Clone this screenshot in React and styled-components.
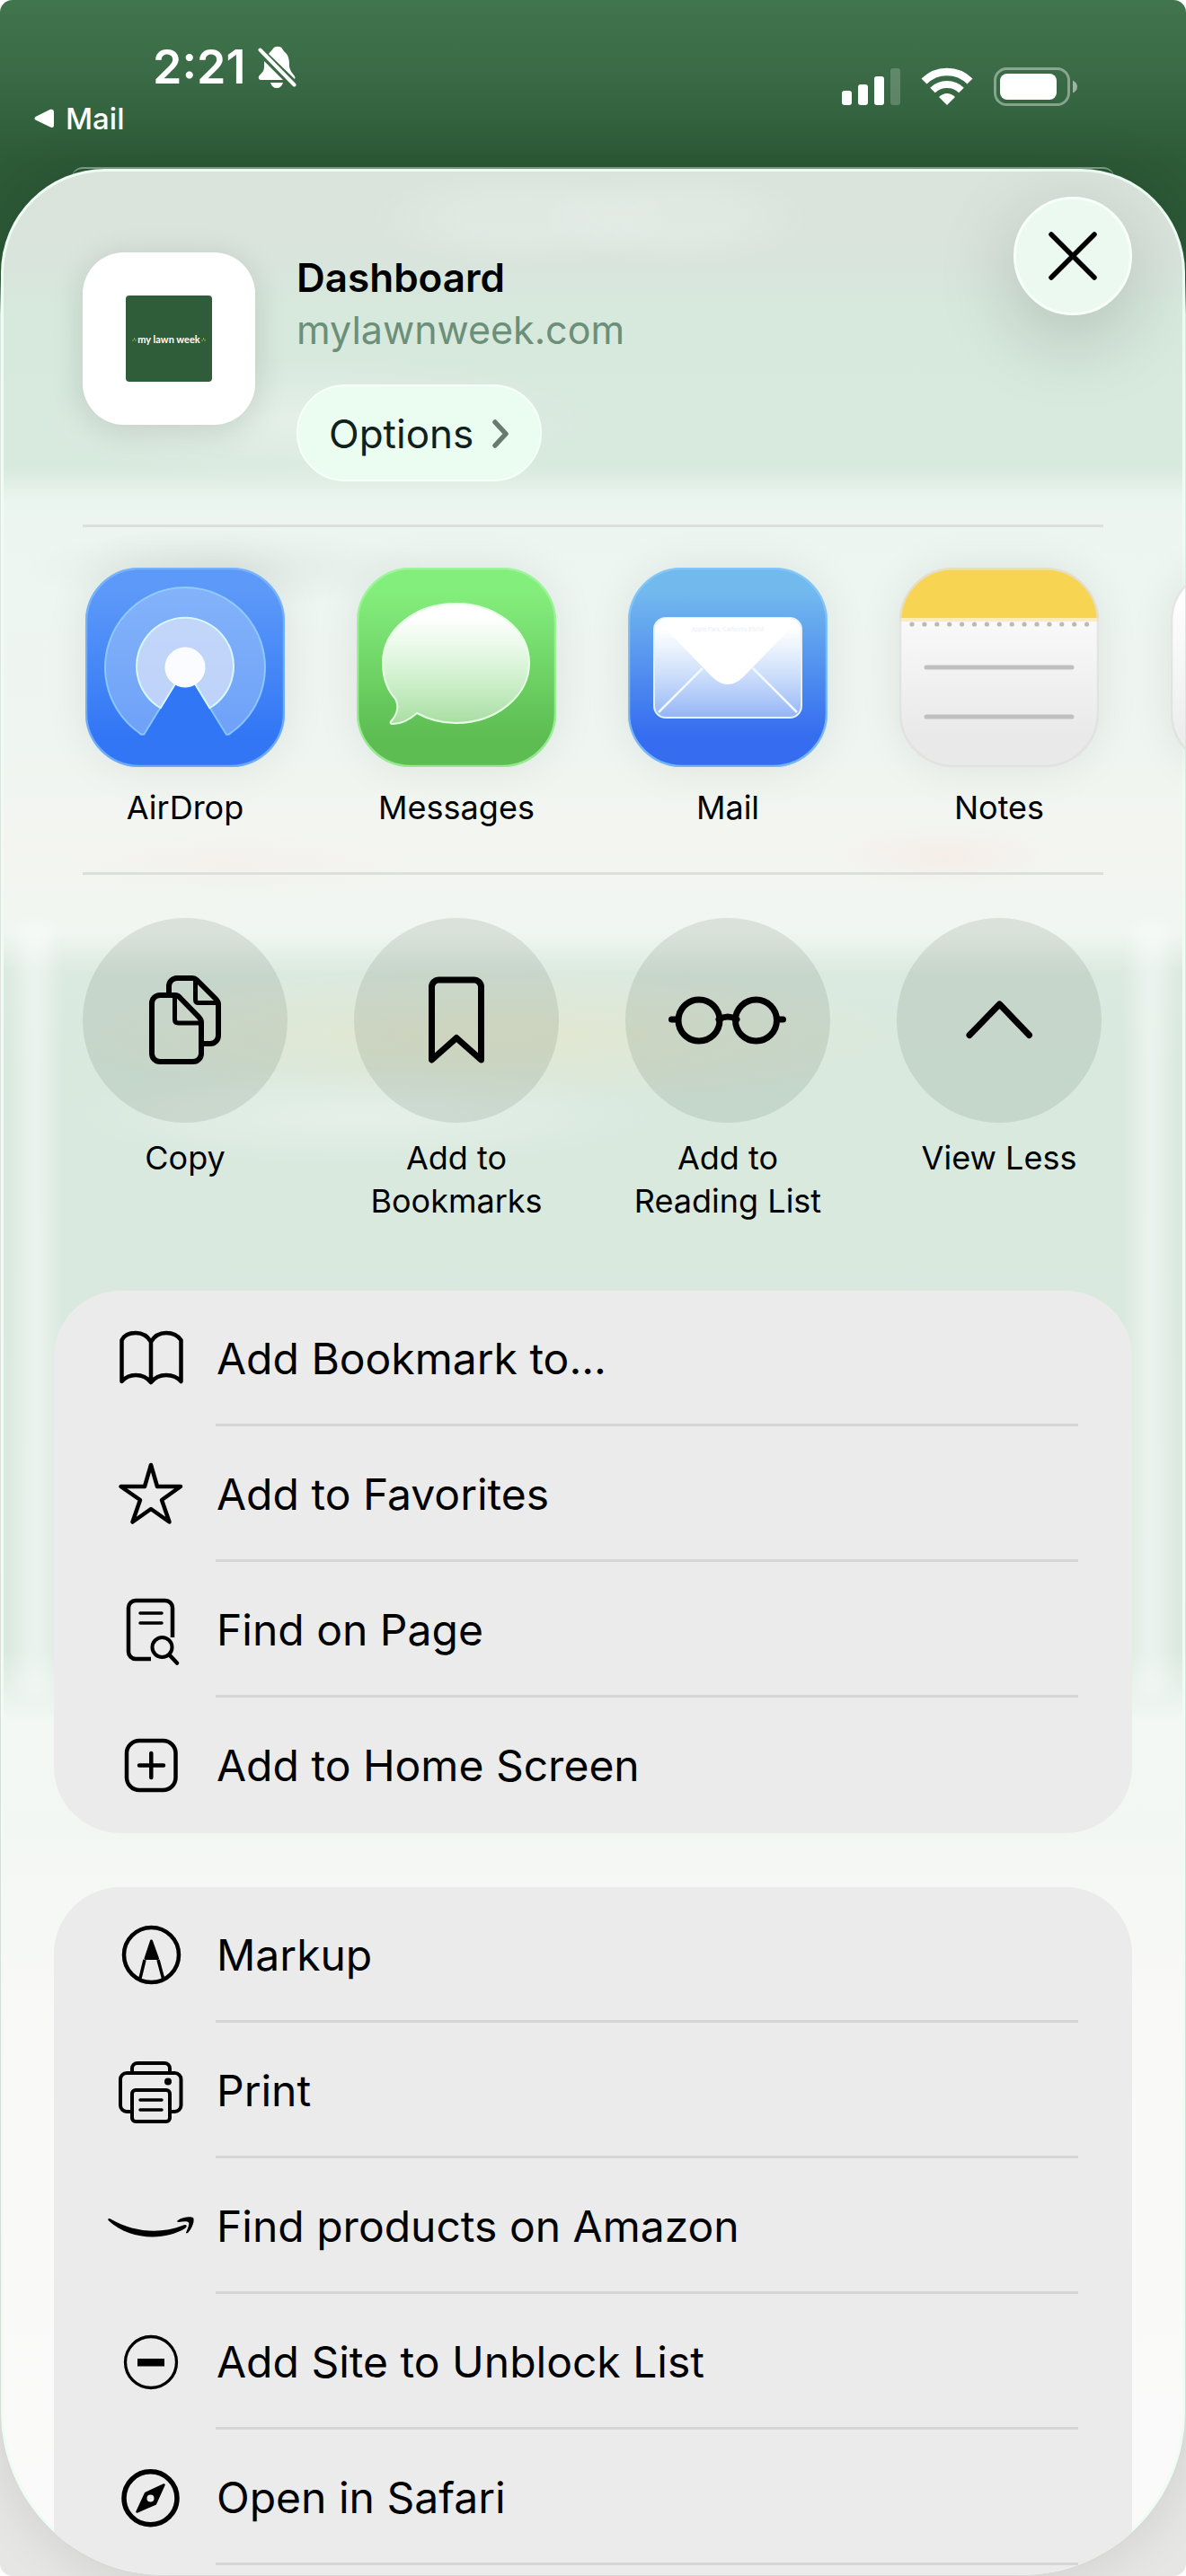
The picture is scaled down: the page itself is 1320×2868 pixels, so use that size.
// src/App.jsx
import React from 'react';
import styled, { createGlobalStyle } from 'styled-components';

const GlobalStyle = createGlobalStyle`
  * {
    box-sizing: border-box;
  }

  body {
    margin: 0;
    background: #ffffff;
    color: #000000;
    font-family: Inter, 'Liberation Sans', sans-serif;
  }

  button {
    border: 0;
    padding: 0;
    margin: 0;
    background: none;
    color: inherit;
    font: inherit;
    cursor: pointer;
  }

  svg {
    display: block;
    flex-shrink: 0;
  }
`;

const Screen = styled.div`
  display: flex;
  flex-direction: column;
  height: 100vh;
  overflow: hidden;
  border-radius: 14px;
  background: linear-gradient(
    #41754d 0,
    #3a6b46 80px,
    #2d5a37 180px,
    #2c5836 310px,
    #e4f5ea 350px,
    #eef3ef 600px,
    #e6e6e5 100%
  );
`;

const StatusBar = styled.header`
  display: flex;
  flex-direction: column;
  height: 188px;
  flex-shrink: 0;
  color: #ffffff;
`;

const StatusRow = styled.div`
  display: flex;
  align-items: flex-start;
  justify-content: space-between;
  height: 112px;
  padding: 44px 120px 0 170px;
`;

const Clock = styled.div`
  display: flex;
  align-items: center;
  gap: 14px;
  font-size: 52px;
  font-weight: 600;
  line-height: 62px;
`;

const Indicators = styled.div`
  display: flex;
  gap: 23px;
  padding-top: 31px;
`;

const BackLink = styled.a`
  display: flex;
  align-items: center;
  gap: 12px;
  height: 40px;
  padding-left: 38px;
  color: #ffffff;
  font-size: 33px;
  font-weight: 500;
  line-height: 40px;
  text-decoration: none;
`;

const SheetBehind = styled.div`
  height: 12px;
  margin: auto 80px -10px;
  border-top: 2px solid #7fa189;
  border-radius: 40px 40px 0 0;
`;

const Sheet = styled.main`
  position: relative;
  z-index: 0;
  display: flex;
  flex: 1;
  flex-direction: column;
  min-height: 0;
  margin: 0 1px 1px;
  overflow: hidden;
  border-radius: 116px 116px 182px 182px;
  box-shadow: inset 0 0 0 3px #eefdf4, 0 0 60px rgba(0, 0, 0, 0.12);
  background:
    radial-gradient(closest-side, rgba(255, 255, 255, 0.18) 40%, transparent) 410px 0 / 340px 110px no-repeat,
    radial-gradient(closest-side, rgba(255, 255, 255, 0.18) 40%, transparent) 600px 0 / 300px 110px no-repeat,
    radial-gradient(closest-side, rgba(255, 255, 255, 0.32), transparent) 40px 210px / 620px 140px no-repeat,
    radial-gradient(closest-side, rgba(0, 0, 0, 0.05), transparent) 20px 400px / 460px 90px no-repeat,
    radial-gradient(closest-side, rgba(255, 190, 180, 0.08), transparent) 60px 740px / 400px 70px no-repeat,
    radial-gradient(closest-side, rgba(255, 180, 170, 0.12), transparent) 920px 730px / 260px 70px no-repeat,
    radial-gradient(closest-side, rgba(255, 225, 170, 0.26), transparent) 60px 890px / 960px 150px no-repeat,
    radial-gradient(closest-side, rgba(255, 255, 255, 0.32), transparent) 60px 1000px / 680px 110px no-repeat,
    linear-gradient(
      #dae3dc 0,
      #d9e4dc 100px,
      #d7e8dc 150px,
      #d8e9de 330px,
      #ebf5ef 370px,
      #eef6f1 460px,
      #eff5f0 650px,
      #f4f5f1 760px,
      #f0f6f1 850px,
      #dbeae0 895px,
      #d9e9de 1000px,
      #dae9df 1650px,
      #f3f8f4 1730px,
      #f3f7f3 1850px,
      #f9f9f8 2060px,
      #fafafa 100%
    );

  &::before,
  &::after {
    content: '';
    position: absolute;
    z-index: -1;
    top: 840px;
    height: 860px;
    width: 36px;
    background: rgba(255, 255, 255, 0.45);
    filter: blur(10px);
  }

  &::before {
    left: 20px;
  }

  &::after {
    right: 20px;
  }
`;

const SheetHeader = styled.div`
  display: flex;
  align-items: flex-start;
  justify-content: space-between;
  padding: 31px 59px 48px 91px;
`;

const Preview = styled.div`
  display: flex;
  align-items: flex-start;
  gap: 46px;
  padding-top: 62px;
`;

const SiteIcon = styled.div`
  display: flex;
  align-items: center;
  justify-content: center;
  width: 192px;
  height: 192px;
  border-radius: 46px;
  background: #ffffff;
  box-shadow: 0 6px 36px rgba(0, 0, 0, 0.13);
`;

const SiteLogo = styled.div`
  display: flex;
  align-items: center;
  justify-content: center;
  gap: 1px;
  width: 96px;
  height: 96px;
  border-radius: 4px;
  background: #2f5c39;
  color: #ffffff;
  font-family: Lato, sans-serif;
  font-size: 11px;
  font-weight: 700;
  white-space: nowrap;
`;

const PageTitle = styled.h1`
  margin: 0;
  font-size: 44px;
  font-weight: 600;
  line-height: 56px;
`;

const PageUrl = styled.p`
  margin: 0 0 31px;
  color: #6b8f78;
  font-size: 43px;
  line-height: 60px;
`;

const OptionsButton = styled.button`
  display: flex;
  align-items: center;
  gap: 20px;
  height: 108px;
  padding: 2px 34px 0;
  border: 2px solid #f7fffa;
  border-radius: 54px;
  background: #ebfcf1;
  color: #10201a;
  font-size: 44px;
`;

const CloseButton = styled.button`
  display: flex;
  align-items: center;
  justify-content: center;
  width: 132px;
  height: 132px;
  border: 3px solid #f8fffb;
  border-radius: 50%;
  background: #ebf9f0;
  box-shadow: 0 24px 90px rgba(0, 0, 0, 0.18);
`;

const Divider = styled.hr`
  width: calc(100% - 182px);
  height: 3px;
  margin: 0 91px;
  flex-shrink: 0;
  border: 0;
  background: #dbe0dc;
`;

const Strip = styled.div`
  display: flex;
  gap: 74px;
  flex-shrink: 0;
  overflow: hidden;
  padding: ${({ $top }) => $top}px 0 ${({ $bottom }) => $bottom}px 91px;
`;

const StripItem = styled.button`
  display: flex;
  flex-direction: column;
  align-items: center;
  gap: ${({ $gap }) => $gap}px;
  width: 228px;
  flex-shrink: 0;
  font-size: 36px;
  line-height: 48px;
`;

const AppTile = styled.span`
  border-radius: 60px;
  box-shadow: 0 0 50px rgba(0, 0, 0, 0.08);
`;

const ActionCircle = styled.span`
  width: 228px;
  height: 228px;
  border-radius: 50%;
  background: rgba(0, 20, 0, 0.09);
`;

const List = styled.ul`
  display: flex;
  flex-direction: column;
  flex-shrink: 0;
  margin: 0 59px 60px;
  padding: 0;
  overflow: hidden;
  border-radius: 74px;
  background: #ebebeb;
  list-style: none;

  &:last-child {
    flex: 1 0 auto;
    margin-bottom: 0;
    border-radius: 74px 74px 0 0;
  }
`;

const ListButton = styled.button`
  display: flex;
  align-items: center;
  gap: 24px;
  width: 100%;
  padding: 0 60px;
  text-align: left;

  svg {
    margin-bottom: 4px;
  }
`;

const ListLabel = styled.span`
  flex: 1;
  height: 151px;
  padding: 2px 0 0 1px;
  border-bottom: 3px solid ${({ $line }) => ($line ? '#d5d5d5' : 'transparent')};
  font-size: 48px;
  line-height: 148px;
  white-space: nowrap;
`;

const LineIcon = ({ width = 4.5, children }) => (
  <svg
    width="96"
    height="96"
    viewBox="0 0 96 96"
    fill="none"
    stroke="#000"
    strokeWidth={width}
    strokeLinecap="round"
    strokeLinejoin="round"
    overflow="visible"
    aria-hidden="true"
  >
    {children}
  </svg>
);

const BookIcon = () => (
  <LineIcon>
    <path d="M48 31C44 24 38 21 31 21S18 24 15.5 29V75C19 71 24 68 31 68S44 71 48 76C52 71 58 68 65 68S78 71 81.5 75V29C78 24 72 21 65 21S52 24 48 31ZM48 31V75" />
  </LineIcon>
);

const StarIcon = () => (
  <LineIcon>
    <path d="M48 17L55 41H81L60 56L68.500 80.500L48 66L27.500 80.500L36 56L14.500 41H41Z" />
  </LineIcon>
);

const FindIcon = () => (
  <LineIcon>
    <path d="M48 82H31a8 8 0 0 1-8-8V25a8 8 0 0 1 8-8H64a8 8 0 0 1 8 8V58" strokeLinecap="butt" />
    <path d="M36 31H60M36 42H60" strokeWidth="3.5" />
    <circle cx="60.500" cy="69" r="11" strokeWidth="4" />
    <path d="M69 78L77 86.500" />
  </LineIcon>
);

const AddBoxIcon = () => (
  <LineIcon>
    <rect x="21" y="22" width="54.500" height="55" rx="14" />
    <path d="M35 49.500H62M48.300 36V63" />
  </LineIcon>
);

const MarkupIcon = () => (
  <LineIcon>
    <circle cx="48.500" cy="49.500" r="30.500" />
    <path d="M41 55L36 75.500M56 55L61.500 75.500" strokeWidth="3.5" strokeLinecap="butt" />
    <path d="M48.500 34L42 53.500H55.500Z" fill="#000" strokeWidth="3" />
  </LineIcon>
);

const PrinterIcon = () => (
  <LineIcon width={4}>
    <path d="M26 73H21a7 7 0 0 1-7-7V37a7 7 0 0 1 7-7H74.500a7 7 0 0 1 7 7V66a7 7 0 0 1-7 7H70" />
    <path d="M27 30V25a6 6 0 0 1 6-6H63a6 6 0 0 1 6 6V30" />
    <rect x="27" y="49" width="42" height="35" rx="4" />
    <path d="M36 60H60M36 71H60" strokeWidth="3.5" />
    <circle cx="67" cy="39.500" r="4" fill="#000" stroke="none" />
  </LineIcon>
);

const SmileIcon = () => (
  <LineIcon>
    <g fill="#000" stroke="none">
      <path d="M.5 43C0 41 1 40.500 3 41.500C28 56 58 59 84 48.500C88 47 89 50 86 52C62 66.500 24 65 .5 43Z" />
      <path d="M78 43C83 39 92 38.500 95 40C97 43 94 52 89 57C87.500 58 86.500 57.500 87.500 55.500C89 52 91 47 90 45.500C88.500 43.500 83 44.500 79 45C77 45 76.500 44 78 43Z" />
    </g>
  </LineIcon>
);

const MinusIcon = () => (
  <LineIcon width={3.3}>
    <circle cx="48" cy="50" r="28.500" />
    <rect x="33" y="46" width="30" height="8.500" fill="#000" stroke="none" />
  </LineIcon>
);

const CompassIcon = () => (
  <LineIcon width={5.5}>
    <circle cx="47.500" cy="50.300" r="29.500" />
    <path
      d="M62.500 35.500L53 56.500L32.500 65.500L42 45Z"
      fill="#000"
      strokeWidth="2.5"
    />
    <circle cx="47.500" cy="50.500" r="4" fill="#ebebeb" stroke="none" />
  </LineIcon>
);

const CircleIcon = ({ children }) => (
  <svg
    width="228"
    height="228"
    viewBox="0 0 228 228"
    fill="none"
    stroke="#000"
    strokeWidth="7"
    strokeLinecap="round"
    strokeLinejoin="round"
    aria-hidden="true"
  >
    {children}
  </svg>
);

const CopyIcon = () => (
  <CircleIcon>
    <g strokeWidth="6" strokeLinecap="butt">
      <path d="M96 84V76a9 9 0 0 1 9-9H122q3 0 5 2L148 90q3 3 3 6V131a9 9 0 0 1-9 9H134" />
      <path d="M125.500 68V91q0 3.500 3.500 3.500H151" strokeWidth="5" />
      <path d="M103 86H86a9 9 0 0 0-9 9V151a9 9 0 0 0 9 9H123a9 9 0 0 0 9-9V116q0-3-3-6L108 88.500q-2-2.500-5-2.500Z" />
      <path d="M102.500 87V113q0 4 4 4H132" strokeWidth="5" />
    </g>
  </CircleIcon>
);

const BookmarkIcon = () => (
  <CircleIcon>
    <path d="M86.500 158V77a8 8 0 0 1 8-8H133.500a8 8 0 0 1 8 8V158L114 133.500Z" />
  </CircleIcon>
);

const GlassesIcon = () => (
  <CircleIcon>
    <circle cx="82" cy="114" r="23" />
    <circle cx="145.500" cy="114" r="23" />
    <path d="M104 113Q114 107 124 113M51.500 113H58M169 113H175.500" />
  </CircleIcon>
);

const ChevronUpIcon = () => (
  <CircleIcon>
    <path d="M81 130.500L114.500 96L147.500 130.500" />
  </CircleIcon>
);

const Tile = ({ id, top, bottom, rim, children }) => (
  <svg width="222" height="222" viewBox="0 0 222 222" fill="none" aria-hidden="true">
    <defs>
      <linearGradient id={`${id}-fill`} x1="0" y1="0" x2="0" y2="1">
        <stop offset="0.12" stopColor={top} />
        <stop offset="0.85" stopColor={bottom} />
      </linearGradient>
      <linearGradient id={`${id}-glass`} x1="0" y1="0" x2="0" y2="1">
        <stop offset="0.1" stopColor="#fff" />
        <stop offset="1" stopColor="#fff" stopOpacity="0.45" />
      </linearGradient>
      <clipPath id={`${id}-clip`}>
        <rect width="222" height="222" rx="60" />
      </clipPath>
    </defs>
    <g clipPath={`url(#${id}-clip)`}>
      <rect width="222" height="222" fill={`url(#${id}-fill)`} />
      {children}
    </g>
    <rect x="1" y="1" width="220" height="220" rx="59" stroke={rim} strokeWidth="2.5" strokeOpacity="0.8" />
  </svg>
);

const AirDropTile = () => (
  <Tile id="airdrop" top="#5c99f8" bottom="#3276f5" rim="#7db8fb">
    <path
      d="M111 111L65.500 185.500A5 5 0 0 1 60 184A89 89 0 1 1 162 184A5 5 0 0 1 156.500 185.500Z"
      fill="#a9ccfb"
      fillOpacity="0.5"
      stroke="#9cdcfd"
      strokeOpacity="0.7"
      strokeWidth="2"
    />
    <path
      d="M111 111L84 156.500A54 54 0 1 1 138 156.500Z"
      fill="#e3e9fb"
      fillOpacity="0.68"
      stroke="#d6f8ff"
      strokeWidth="2"
      strokeLinejoin="round"
    />
    <path d="M111 114L66.500 186H155.500Z" fill="#3176f5" />
    <circle cx="111" cy="111" r="22" fill="#fbfcff" stroke="#fff" strokeWidth="1" />
  </Tile>
);

const MessagesTile = () => (
  <Tile id="messages" top="#84ee7d" bottom="#5dbd52" rim="#a4f5a0">
    <path
      d="M110 40C155 40 192 69 192 106S155 173 110 173C95 173 80 169 67 162C58 170 48 174 40 174C37 174 37 172 39 170C46 162 47 153 43 146C34 136 29 122 29 106C29 69 65 40 110 40Z"
      fill="url(#messages-glass)"
      stroke="#e4ffe4"
      strokeWidth="2"
    />
  </Tile>
);

const MailTile = () => (
  <Tile id="mail" top="#72b9ee" bottom="#356cf0" rim="#85c8fb">
    <rect x="29" y="56" width="164" height="111" rx="13" fill="url(#mail-glass)" stroke="#e3f2ff" strokeWidth="2" />
    <path d="M83 112L34 161M139 112L188 161" stroke="#f2faff" strokeWidth="2.5" />
    <path d="M34 60Q38 56 44 56H178Q184 56 188 60L128 122Q111 138 94 122Z" fill="#fff" />
    <text x="111" y="71" fill="#e9eef8" fontSize="6" textAnchor="middle">
      Apple Park, California 95014
    </text>
  </Tile>
);

const NotesTile = () => (
  <Tile id="notes" top="#fdfdfd" bottom="#e9e9e9" rim="#dedede">
    <rect width="222" height="56" fill="#f7d553" />
    <rect y="56" width="222" height="4" fill="#fbedb4" />
    {Array.from({ length: 15 }, (_, i) => (
      <circle key={i} cx={14 + i * 13.9} cy="63" r="2.6" fill="#bcb9ad" />
    ))}
    <path d="M30 111H192M30 166H192" stroke="#c0c0c0" strokeWidth="5" strokeLinecap="round" />
    <path d="M1 56C1 22 24 1 60 1H162C198 1 221 22 221 56" stroke="#fbe36b" strokeWidth="3" />
  </Tile>
);

const NextTile = () => <Tile id="next" top="#ffffff" bottom="#ededed" rim="#dedede" />;

const BellOffIcon = () => (
  <svg width="44" height="48" viewBox="0 0 44 48" fill="#fff" aria-hidden="true">
    <path d="M12 9C14 6 16 5 17 3C19 0 25 0 27 3C28 5 29 6 31 8C35 12 35 18 35 23C36 28 38 30 41 34Q42 36 41 37Z" />
    <path d="M7 17L28 38H3Q0 37 1 34C5 29 7 29 7 22Z" />
    <path d="M14 41H28Q26 47 21 47T14 41Z" />
    <path d="M2.500 4.500L40.500 43.500" stroke="#fff" strokeWidth="4" strokeLinecap="round" />
  </svg>
);

const SignalIcon = () => (
  <svg width="65" height="42" viewBox="0 0 65 42" fill="#fff" aria-hidden="true">
    <rect y="26" width="11" height="16" rx="3" />
    <rect x="18" y="19" width="11" height="23" rx="3" />
    <rect x="36" y="10" width="11" height="32" rx="3" />
    <rect x="54" y="1" width="11" height="41" rx="3" fillOpacity="0.2" />
  </svg>
);

const WifiIcon = () => (
  <svg width="58" height="42" viewBox="0 0 58 42" fill="none" stroke="#fff" aria-hidden="true">
    <path d="M3.500 15.500A36 36 0 0 1 54.500 15.500" strokeWidth="8.500" />
    <path d="M13 25.500A23 23 0 0 1 45 25.500" strokeWidth="8" />
    <path d="M20 33Q29 25 38 33L29 42Z" fill="#fff" stroke="none" />
  </svg>
);

const BatteryIcon = () => (
  <svg width="94" height="43" viewBox="0 0 94 43" fill="none" aria-hidden="true">
    <rect x="1.500" y="1.500" width="82" height="40" rx="13" stroke="#fff" strokeOpacity="0.4" strokeWidth="3" />
    <rect x="7" y="7" width="63" height="29" rx="8" fill="#fff" />
    <path d="M88 14.500Q93 17 93 21.500T88 28.500Z" fill="#fff" fillOpacity="0.5" />
  </svg>
);

const BackArrowIcon = () => (
  <svg width="23" height="22" viewBox="0 0 23 22" fill="#fff" aria-hidden="true">
    <path d="M1.500 9L18 .8Q22 0 22 4V18Q22 22 18 20.500L1.500 12.500Q-.5 11 1.500 9Z" />
  </svg>
);

const CloseIcon = () => (
  <svg width="56" height="56" viewBox="0 0 56 56" stroke="#000" strokeWidth="5.5" strokeLinecap="round" aria-hidden="true">
    <path d="M4 4L52 52M52 4L4 52" />
  </svg>
);

const ChevronRightIcon = () => (
  <svg width="20" height="32" viewBox="0 0 20 32" fill="none" stroke="#68796e" strokeWidth="5.5" strokeLinecap="round" strokeLinejoin="round" aria-hidden="true">
    <path d="M4 3L16 16L4 29" />
  </svg>
);

const GrassIcon = () => (
  <svg width="5" height="5" viewBox="0 0 5 5" fill="none" stroke="#7fb35a" aria-hidden="true">
    <path d="M1 5V3M2.500 3V1M4 5V2.500" />
  </svg>
);

const apps = [
  { name: 'AirDrop', icon: AirDropTile },
  { name: 'Messages', icon: MessagesTile },
  { name: 'Mail', icon: MailTile },
  { name: 'Notes', icon: NotesTile },
  { name: '', icon: NextTile },
];

const quickActions = [
  { name: 'Copy', icon: CopyIcon },
  { name: 'Add to Bookmarks', icon: BookmarkIcon },
  { name: 'Add to Reading List', icon: GlassesIcon },
  { name: 'View Less', icon: ChevronUpIcon },
];

const bookmarkActions = [
  { name: 'Add Bookmark to...', icon: BookIcon },
  { name: 'Add to Favorites', icon: StarIcon },
  { name: 'Find on Page', icon: FindIcon },
  { name: 'Add to Home Screen', icon: AddBoxIcon },
];

const pageActions = [
  { name: 'Markup', icon: MarkupIcon },
  { name: 'Print', icon: PrinterIcon },
  { name: 'Find products on Amazon', icon: SmileIcon },
  { name: 'Add Site to Unblock List', icon: MinusIcon },
  { name: 'Open in Safari', icon: CompassIcon },
];

const ActionList = ({ actions, more }) => (
  <List>
    {actions.map(({ name, icon: Icon }, index) => (
      <li key={name}>
        <ListButton type="button">
          <Icon />
          <ListLabel $line={more || index < actions.length - 1}>{name}</ListLabel>
        </ListButton>
      </li>
    ))}
  </List>
);

const App = () => {
  return (
    <>
      <GlobalStyle />
      <Screen>
        <StatusBar>
          <StatusRow>
            <Clock>
              2:21
              <BellOffIcon />
            </Clock>
            <Indicators>
              <SignalIcon />
              <WifiIcon />
              <BatteryIcon />
            </Indicators>
          </StatusRow>
          <BackLink href="#mail">
            <BackArrowIcon />
            Mail
          </BackLink>
          <SheetBehind />
        </StatusBar>

        <Sheet>
          <SheetHeader>
            <Preview>
              <SiteIcon>
                <SiteLogo>
                  <GrassIcon />
                  my lawn week
                  <GrassIcon />
                </SiteLogo>
              </SiteIcon>
              <div>
                <PageTitle>Dashboard</PageTitle>
                <PageUrl>mylawnweek.com</PageUrl>
                <OptionsButton type="button">
                  Options
                  <ChevronRightIcon />
                </OptionsButton>
              </div>
            </Preview>
            <CloseButton type="button" aria-label="Close">
              <CloseIcon />
            </CloseButton>
          </SheetHeader>

          <Divider />
          <Strip $top={45} $bottom={48}>
            {apps.map(({ name, icon: Icon }) => (
              <StripItem key={name} type="button" $gap={21} aria-label={name || 'More apps'}>
                <AppTile>
                  <Icon />
                </AppTile>
                {name}
              </StripItem>
            ))}
          </Strip>

          <Divider />
          <Strip $top={48} $bottom={76}>
            {quickActions.map(({ name, icon: Icon }) => (
              <StripItem key={name} type="button" $gap={15}>
                <ActionCircle>
                  <Icon />
                </ActionCircle>
                {name}
              </StripItem>
            ))}
          </Strip>

          <ActionList actions={bookmarkActions} />
          <ActionList actions={pageActions} more />
        </Sheet>
      </Screen>
    </>
  );
};

export default App;
